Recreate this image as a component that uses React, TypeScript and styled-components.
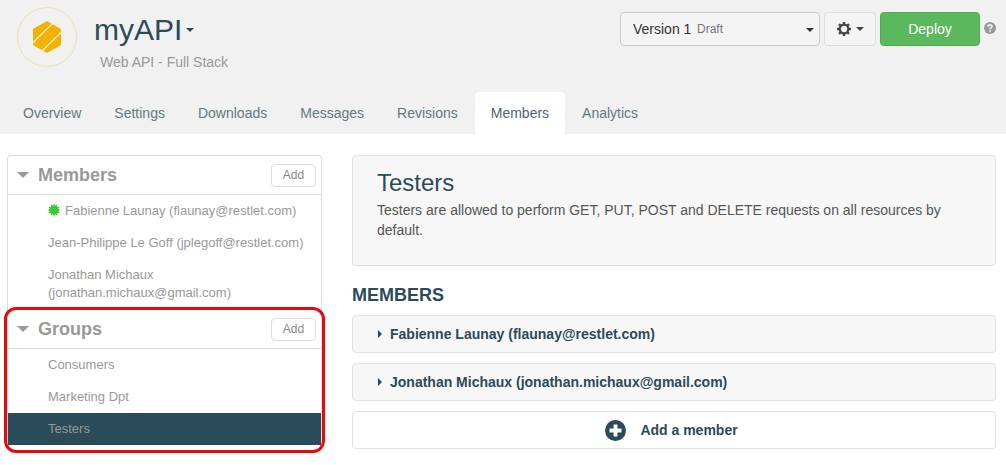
import React from "react";
import styled, { createGlobalStyle } from "styled-components";

const ink = "#2a4b5a";
const muted = "#999";
const line = "#ddd";

const GlobalStyle = createGlobalStyle`
  *, *::before, *::after { box-sizing: border-box; }
  body {
    margin: 0;
    background: #fff;
    color: #555;
    font: 14px/20px "Liberation Sans", Arial, sans-serif;
  }
  h1, h2, h3, p, ul { margin: 0; padding: 0; }
  ul { list-style: none; }
  button, select { font: inherit; cursor: pointer; }
  a { color: inherit; text-decoration: none; }
`;

const Header = styled.header`
  background: #f1f1f1;
`;

const TopBar = styled.div`
  display: flex;
  align-items: flex-start;
  height: 92px;
  padding: 7px 10px 0 17px;
`;

const Logo = styled.svg`
  flex: none;
  width: 60px;
  height: 60px;
`;

const Heading = styled.div`
  flex: 1;
  margin-left: 17px;
`;

const ApiName = styled.button`
  display: flex;
  align-items: center;
  gap: 4px;
  padding: 0;
  border: 0;
  background: none;
  color: ${ink};
`;

const Title = styled.h1`
  font-size: 30px;
  line-height: 46px;
  font-weight: 400;
`;

const Subtitle = styled.p`
  padding-left: 6px;
  line-height: 18px;
  color: ${muted};
`;

const Caret = styled.span<{ $dir?: "down" | "right"; $size?: number }>`
  flex: none;
  border: ${(p) => p.$size ?? 4}px solid transparent;
  ${(p) =>
    p.$dir === "right"
      ? "border-left-color: currentColor; border-right: 0;"
      : "border-top-color: currentColor; border-bottom: 0;"}
`;

const Actions = styled.div`
  display: flex;
  gap: 4px;
  padding-top: 5px;
`;

const VersionPicker = styled.div`
  display: grid;
  grid-template-columns: 77px 1fr auto;
  align-items: center;
  width: 200px;
  color: #333;
`;

const VersionSelect = styled.select`
  grid-area: 1 / 1 / 2 / -1;
  width: 100%;
  height: 34px;
  padding: 0 12px;
  border: 1px solid #ccc;
  border-radius: 4px;
  background: #f4f4f4;
  color: inherit;
  appearance: none;
`;

const VersionState = styled.span`
  grid-area: 1 / 2;
  font-size: 12px;
  color: #777;
  pointer-events: none;
`;

const VersionCaret = styled(Caret)`
  grid-area: 1 / 3;
  margin: 2px 6px 0 0;
  pointer-events: none;
`;

const GearButton = styled.button`
  display: flex;
  align-items: center;
  justify-content: center;
  gap: 5px;
  width: 52px;
  height: 34px;
  padding: 0;
  border: 1px solid ${line};
  border-radius: 4px;
  background: #f4f4f4;
  color: #444;
`;

const DeployButton = styled.button`
  width: 100px;
  height: 34px;
  border: 1px solid #4cae4c;
  border-radius: 4px;
  background: #5cb85c;
  color: #fff;
`;

const HelpLink = styled.a`
  display: flex;
  padding-top: 10px;
  height: 22px;
`;

const Tabs = styled.nav`
  display: flex;
  gap: 1px;
  padding-left: 7px;
`;

const Tab = styled.a<{ $active?: boolean }>`
  padding: 11px 16px;
  border-radius: 4px 4px 0 0;
  background: ${(p) => (p.$active ? "#fff" : "transparent")};
  color: ${(p) => (p.$active ? "#4c6472" : "#667880")};
`;

const Body = styled.main`
  display: grid;
  grid-template-columns: 315px 1fr;
  align-items: start;
  gap: 30px;
  padding: 21px 10px 16px 7px;
`;

const Sidebar = styled.aside`
  display: flex;
  flex-direction: column;
  gap: 1px;
  border: 1px solid ${line};
  border-bottom: 0;
  border-radius: 4px;
  color: ${muted};
`;

const Group = styled.section<{ $marked?: boolean }>`
  position: relative;
  ${(p) =>
    p.$marked &&
    `&::after {
      content: "";
      position: absolute;
      inset: -3px -4px -8px;
      border: 3px solid #e30b0f;
      border-radius: 12px;
      pointer-events: none;
    }`}
`;

const GroupHead = styled.div`
  display: flex;
  align-items: center;
  gap: 9px;
  height: 39px;
  padding: 0 5px 0 9px;
  border-bottom: 1px solid ${line};
`;

const GroupTitle = styled.h2`
  flex: 1;
  font-size: 18px;
  line-height: 24px;
  font-weight: 700;
`;

const AddButton = styled.button`
  width: 45px;
  height: 23px;
  padding: 0;
  border: 1px solid ${line};
  border-radius: 4px;
  background: #fff;
  color: #888;
  font-size: 12px;
  line-height: 18px;
`;

const Entry = styled.a<{ $active?: boolean }>`
  display: block;
  padding: 7px 0 7px 40px;
  font-size: 13px;
  line-height: 18px;
  background: ${(p) => (p.$active ? ink : "transparent")};
`;

const Owner = styled.svg`
  width: 12px;
  height: 12px;
  margin-right: 5px;
  vertical-align: -1px;
`;

const Content = styled.section`
  display: flex;
  flex-direction: column;
`;

const Intro = styled.div`
  padding: 13px 24px 25px;
  border: 1px solid #e1e1e1;
  border-radius: 4px;
  background: #f7f7f7;
`;

const IntroTitle = styled.h2`
  margin-bottom: 4px;
  font-size: 24px;
  line-height: 27px;
  font-weight: 400;
  color: ${ink};
`;

const SectionTitle = styled.h3`
  margin: 19px 0 10px;
  font-size: 18px;
  line-height: 20px;
  color: ${ink};
`;

const Rows = styled.div`
  display: flex;
  flex-direction: column;
  gap: 10px;
`;

const Row = styled.button`
  display: flex;
  align-items: center;
  gap: 8px;
  height: 38px;
  padding: 0 25px;
  border: 1px solid #e1e1e1;
  border-radius: 4px;
  background: #f7f7f7;
  color: ${ink};
  font-weight: 700;
`;

const AddRow = styled(Row)`
  justify-content: center;
  gap: 14px;
  padding-right: 30px;
  background: #fff;
`;

const tabs = ["Overview", "Settings", "Downloads", "Messages", "Revisions", "Members", "Analytics"];

const people = [
  { name: "Fabienne Launay (flaunay@restlet.com)", owner: true },
  { name: "Jean-Philippe Le Goff (jplegoff@restlet.com)" },
  { name: "Jonathan Michaux (jonathan.michaux@gmail.com)" },
];

const groups = ["Consumers", "Marketing Dpt", "Testers"];

const testers = ["Fabienne Launay (flaunay@restlet.com)", "Jonathan Michaux (jonathan.michaux@gmail.com)"];

const burst = Array.from({ length: 24 }, (_, i) => {
  const r = i % 2 ? 4.4 : 6.2;
  const a = (i * Math.PI) / 12;
  return `${(6 + r * Math.sin(a)).toFixed(2)},${(6 - r * Math.cos(a)).toFixed(2)}`;
}).join(" ");

const GearIcon = () => (
  <svg width="14" height="14" viewBox="0 0 14 14" fill="none" stroke="currentColor" aria-hidden="true">
    <circle cx="7" cy="7" r="4.3" strokeWidth="2.2" />
    {[0, 45, 90, 135, 180, 225, 270, 315].map((a) => (
      <path key={a} d="M7 2.4V0" strokeWidth="2.4" transform={`rotate(${a} 7 7)`} />
    ))}
  </svg>
);

export default function App() {
  return (
    <>
      <GlobalStyle />
      <Header>
        <TopBar>
          <Logo viewBox="0 0 60 60" aria-hidden="true">
            <circle cx="30" cy="30" r="29.5" fill="none" stroke="#eee0b0" />
            <path d="M30 14l14 8v16l-14 8-14-8V22z" fill="#f3b200" />
            <path d="M15 36.5L36 16M24 45L45 24.5" stroke="#fbf0d0" strokeWidth="1.2" fill="none" />
          </Logo>
          <Heading>
            <ApiName type="button">
              <Title>myAPI</Title>
              <Caret />
            </ApiName>
            <Subtitle>Web API - Full Stack</Subtitle>
          </Heading>
          <Actions>
            <VersionPicker>
              <VersionSelect aria-label="Version" defaultValue="1">
                <option value="1">Version 1</option>
              </VersionSelect>
              <VersionState>Draft</VersionState>
              <VersionCaret />
            </VersionPicker>
            <GearButton type="button" aria-label="Settings menu">
              <GearIcon />
              <Caret />
            </GearButton>
            <DeployButton type="button">Deploy</DeployButton>
            <HelpLink href="#help" aria-label="Help">
              <svg width="12" height="12" viewBox="0 0 12 12" aria-hidden="true">
                <circle cx="6" cy="6" r="6" fill="#999" />
                <path d="M4 4.7C4 2.4 8 2.4 8 4.6 8 6 6.1 5.8 6.1 7.3M6.1 8.2V9.8" fill="none" stroke="#f1f1f1" strokeWidth="1.7" />
              </svg>
            </HelpLink>
          </Actions>
        </TopBar>
        <Tabs>
          {tabs.map((tab) => (
            <Tab key={tab} href={`#${tab.toLowerCase()}`} $active={tab === "Members"}>
              {tab}
            </Tab>
          ))}
        </Tabs>
      </Header>
      <Body>
        <Sidebar>
          <Group>
            <GroupHead>
              <Caret $size={6} />
              <GroupTitle>Members</GroupTitle>
              <AddButton type="button">Add</AddButton>
            </GroupHead>
            <ul>
              {people.map((p) => (
                <li key={p.name}>
                  <Entry href="#member">
                    {p.owner && (
                      <Owner viewBox="0 0 12 12" aria-hidden="true">
                        <polygon points={burst} fill="#3c3" />
                      </Owner>
                    )}
                    {p.name}
                  </Entry>
                </li>
              ))}
            </ul>
          </Group>
          <Group $marked>
            <GroupHead>
              <Caret $size={6} />
              <GroupTitle>Groups</GroupTitle>
              <AddButton type="button">Add</AddButton>
            </GroupHead>
            <ul>
              {groups.map((g) => (
                <li key={g}>
                  <Entry href="#group" $active={g === "Testers"}>
                    {g}
                  </Entry>
                </li>
              ))}
            </ul>
          </Group>
        </Sidebar>
        <Content>
          <Intro>
            <IntroTitle>Testers</IntroTitle>
            <p>
              Testers are allowed to perform GET, PUT, POST and DELETE requests on all resources by default.
            </p>
          </Intro>
          <SectionTitle>MEMBERS</SectionTitle>
          <Rows>
            {testers.map((t) => (
              <Row key={t} type="button">
                <Caret $dir="right" />
                {t}
              </Row>
            ))}
            <AddRow type="button">
              <svg width="21" height="21" viewBox="0 0 21 21" aria-hidden="true">
                <circle cx="10.5" cy="10.5" r="10.5" fill={ink} />
                <path d="M10.5 4.5v12M4.5 10.5h12" stroke="#fff" strokeWidth="3.8" />
              </svg>
              Add a member
            </AddRow>
          </Rows>
        </Content>
      </Body>
    </>
  );
}
